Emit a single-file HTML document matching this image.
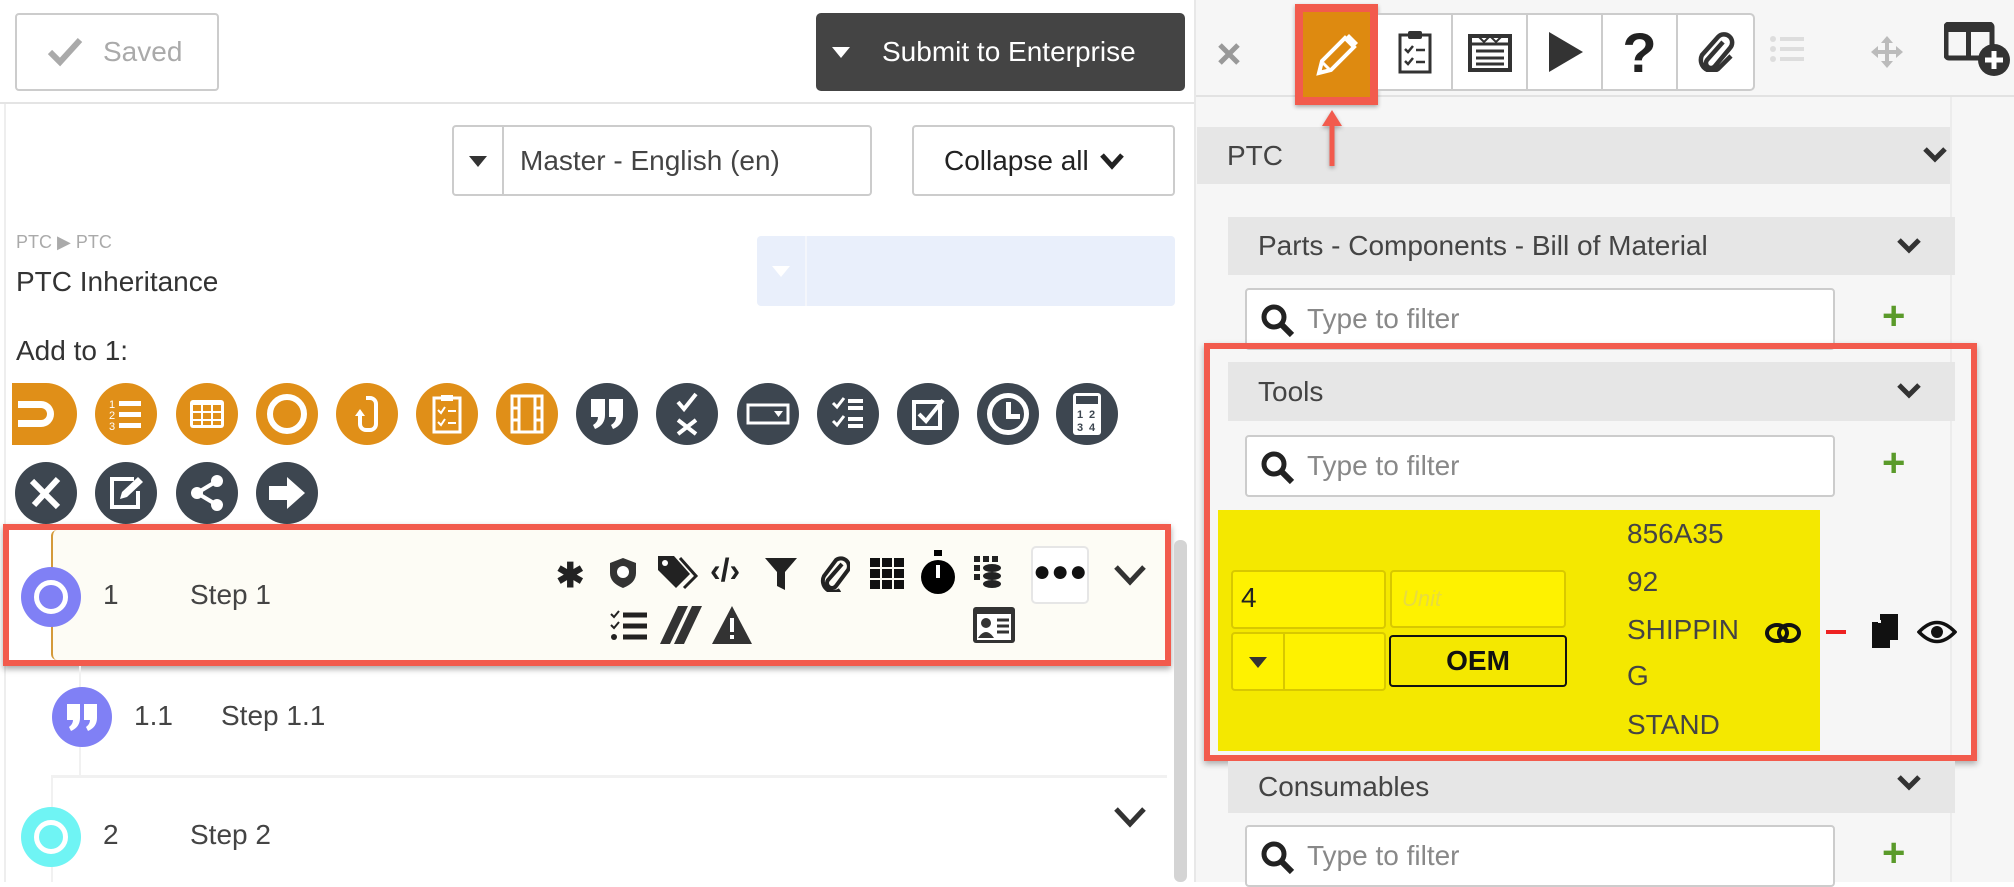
<!DOCTYPE html>
<html><head><meta charset="utf-8"><style>
*{box-sizing:border-box;margin:0;padding:0}
body{width:2014px;height:882px;overflow:hidden;background:#fff;font-family:"Liberation Sans",sans-serif;color:#333;position:relative}
.a{position:absolute}
.btn{border:2px solid #ccc;border-radius:4px;background:#fff}
.ci{position:absolute;width:62px;height:62px;border-radius:50%;display:flex;align-items:center;justify-content:center}
.o{background:#e08f18}.d{background:#3d4650}
.hdr{position:absolute;background:#e6e6e6;font-size:28px;color:#444;padding-left:30px;display:flex;align-items:center}
.flt{position:absolute;background:#fff;border:2px solid #ccc;border-radius:4px;font-size:28px;color:#888;display:flex;align-items:center;padding-left:60px}
.plus{position:absolute;color:#5a9a2a;font-size:40px;font-weight:bold}
.tb{position:absolute;top:13px;width:75px;height:78px;border-right:2px solid #ccc;display:flex;align-items:center;justify-content:center}
.yl{position:absolute;font-size:28px;color:#444}
</style></head><body>

<!-- LEFT PANEL -->
<div class="a btn" style="left:15px;top:13px;width:204px;height:78px;display:flex;align-items:center;padding-left:30px;font-size:28px;color:#aaa">
<svg width="36" height="30" viewBox="0 0 36 30"><path d="M3 15l10 10L33 3" stroke="#aaa" stroke-width="6" fill="none"/></svg><span style="margin-left:20px">Saved</span></div>
<div class="a" style="left:816px;top:13px;width:369px;height:78px;background:#444;border-radius:5px;color:#fff;font-size:28px;display:flex;align-items:center;padding-left:16px">
<svg width="20" height="14"><path d="M0 2h18L9 13z" fill="#fff"/></svg><span style="margin-left:30px">Submit to Enterprise</span></div>
<div class="a" style="left:0;top:102px;width:1196px;height:2px;background:#e4e4e4"></div>
<div class="a" style="left:1194px;top:0;width:2px;height:882px;background:#e8e8e8"></div>
<div class="a" style="left:4px;top:104px;width:2px;height:778px;background:#eee"></div>

<div class="a btn" style="left:452px;top:125px;width:420px;height:71px;display:flex;align-items:center;font-size:28px;color:#444">
<div style="width:50px;height:100%;border-right:2px solid #ccc;display:flex;align-items:center;justify-content:center"><svg width="18" height="12"><path d="M0 1h18L9 12z" fill="#333"/></svg></div><span style="margin-left:16px">Master - English (en)</span></div>
<div class="a btn" style="left:912px;top:125px;width:263px;height:71px;display:flex;align-items:center;font-size:28px;color:#222;padding-left:30px">Collapse all <svg width="26" height="20" style="margin-left:10px"><path d="M3 4l10 11L23 4" stroke="#222" stroke-width="5" fill="none"/></svg></div>

<div class="a" style="left:16px;top:232px;font-size:18px;color:#aaa">PTC ▶ PTC</div>
<div class="a" style="left:16px;top:266px;font-size:28px;color:#333">PTC Inheritance</div>
<div class="a" style="left:757px;top:236px;width:418px;height:70px;background:#e9effb;border-radius:4px">
<div style="width:50px;height:100%;border-right:2px solid #f4f6fb;display:flex;align-items:center;justify-content:center"><svg width="18" height="12"><path d="M0 1h18L9 12z" fill="#fff"/></svg></div></div>
<div class="a" style="left:16px;top:335px;font-size:28px;color:#333">Add to 1:</div>

<!-- icon circles row 1: centers 46 + 80n -->
<div class="ci o" style="left:12px;top:383px;width:65px;border-radius:0 31px 31px 0"><div style="width:36px;height:26px;border:7px solid #fff;border-left:none;border-radius:0 13px 13px 0;background:#e08f18;margin-left:-18px"></div></div>
<div class="ci o" style="left:95px;top:383px"><svg width="34" height="34"><g fill="#fff"><text x="0" y="11" font-size="11" font-family="Liberation Sans" fill="#fff">1</text><text x="0" y="22" font-size="11" font-family="Liberation Sans" fill="#fff">2</text><text x="0" y="33" font-size="11" font-family="Liberation Sans" fill="#fff">3</text><rect x="10" y="4" width="22" height="5"/><rect x="10" y="15" width="22" height="5"/><rect x="10" y="26" width="22" height="5"/></g></svg></div>
<div class="ci o" style="left:176px;top:383px"><svg width="34" height="28"><g fill="#fff"><rect x="0" y="0" width="34" height="28" rx="3"/></g><g fill="#e08f18"><rect x="3" y="5" width="8" height="6"/><rect x="13" y="5" width="8" height="6"/><rect x="23" y="5" width="8" height="6"/><rect x="3" y="13" width="8" height="6"/><rect x="13" y="13" width="8" height="6"/><rect x="23" y="13" width="8" height="6"/><rect x="3" y="21" width="8" height="4"/><rect x="13" y="21" width="8" height="4"/><rect x="23" y="21" width="8" height="4"/></g></svg></div>
<div class="ci o" style="left:256px;top:383px"><div style="width:40px;height:40px;border:6px solid #fff;border-radius:50%"></div></div>
<div class="ci o" style="left:336px;top:383px"><svg width="30" height="40"><path d="M14 4h4a6 6 0 0 1 6 6v20a6 6 0 0 1-6 6h-4a6 6 0 0 1-6-6V20" stroke="#fff" stroke-width="4" fill="none"/><path d="M3 22l5-7 5 7z" fill="#fff"/></svg></div>
<div class="ci o" style="left:416px;top:383px"><svg width="30" height="40"><rect x="2" y="4" width="26" height="34" fill="none" stroke="#fff" stroke-width="3"/><rect x="9" y="1" width="12" height="6" fill="#fff"/><path d="M6 16l3 3 4-6M6 28l3 3 4-6M16 17h8M16 29h8" stroke="#fff" stroke-width="2" fill="none"/></svg></div>
<div class="ci o" style="left:496px;top:383px"><svg width="34" height="40"><rect x="2" y="2" width="30" height="36" fill="none" stroke="#fff" stroke-width="3"/><path d="M9 2v36M25 2v36M2 14h7M2 26h7M25 14h7M25 26h7" stroke="#fff" stroke-width="3"/></svg></div>
<div class="ci d" style="left:576px;top:383px"><svg width="36" height="34"><path d="M2 2h14v16q0 10-10 14l-2-4q5-3 5-8H2zM20 2h14v16q0 10-10 14l-2-4q5-3 5-8h-7z" fill="#fff"/></svg></div>
<div class="ci d" style="left:656px;top:383px"><svg width="26" height="44"><path d="M4 10l6 7L22 2M4 28l18 14M22 28L4 42" stroke="#fff" stroke-width="4" fill="none"/></svg></div>
<div class="ci d" style="left:737px;top:383px"><svg width="44" height="22"><rect x="2" y="2" width="40" height="18" fill="none" stroke="#fff" stroke-width="3"/><path d="M28 8h9l-4.5 6z" fill="#fff"/></svg></div>
<div class="ci d" style="left:817px;top:383px"><svg width="34" height="38"><path d="M2 8l4 4 7-9M2 26l4 4 7-9" stroke="#fff" stroke-width="3" fill="none"/><path d="M17 6h15M17 13h15M17 24h15M17 31h15" stroke="#fff" stroke-width="4"/></svg></div>
<div class="ci d" style="left:897px;top:383px"><svg width="34" height="34"><rect x="3" y="5" width="26" height="26" fill="none" stroke="#fff" stroke-width="4"/><path d="M8 17l7 7L32 3" stroke="#fff" stroke-width="4" fill="none"/></svg></div>
<div class="ci d" style="left:977px;top:383px"><div style="width:42px;height:42px;border:5px solid #fff;border-radius:50%;position:relative"><div style="position:absolute;left:14px;top:4px;width:5px;height:16px;background:#fff"></div><div style="position:absolute;left:14px;top:16px;width:14px;height:5px;background:#fff"></div></div></div>
<div class="ci d" style="left:1056px;top:383px"><svg width="30" height="44"><rect x="1" y="1" width="28" height="42" rx="3" fill="#fff"/><rect x="4" y="4" width="22" height="8" fill="#3d4650"/><g fill="#3d4650" font-size="11" font-family="Liberation Sans" font-weight="bold"><text x="5" y="26">1</text><text x="17" y="26">2</text><text x="5" y="39">3</text><text x="17" y="39">4</text></g></svg></div>

<div class="ci d" style="left:15px;top:462px"><svg width="40" height="40"><path d="M6 8l26 26M32 6L8 32" stroke="#fff" stroke-width="6"/></svg></div>
<div class="ci d" style="left:95px;top:462px"><svg width="36" height="36"><path d="M26 4H4v28h26V16" stroke="#fff" stroke-width="4" fill="none"/><path d="M12 24l2-7L30 2l5 5-16 15z" fill="#fff"/></svg></div>
<div class="ci d" style="left:176px;top:462px"><svg width="40" height="40"><circle cx="10" cy="20" r="6" fill="#fff"/><circle cx="30" cy="8" r="6" fill="#fff"/><circle cx="30" cy="32" r="6" fill="#fff"/><path d="M10 20L30 8M10 20l20 12" stroke="#fff" stroke-width="4"/></svg></div>
<div class="ci d" style="left:256px;top:462px"><svg width="40" height="36"><path d="M2 11h18V2l18 16-18 16v-9H2z" fill="#fff"/></svg></div>

<!-- Step 1 -->
<div class="a" style="left:51px;top:530px;width:1115px;height:130px;background:#fdfcf5;border-left:2px solid #d49a3a;border-radius:6px"></div>
<div class="a" style="left:3px;top:524px;width:1168px;height:142px;border:6px solid #f25b4d;box-shadow:0 3px 6px rgba(0,0,0,.35)"></div>
<div class="a" style="left:21px;top:567px;width:60px;height:60px;border-radius:50%;background:#8080f5;display:flex;align-items:center;justify-content:center"><div style="width:34px;height:34px;border:5px solid #fff;border-radius:50%"></div></div>
<div class="a" style="left:103px;top:579px;font-size:28px;color:#444">1</div>
<div class="a" style="left:190px;top:579px;font-size:28px;color:#444">Step 1</div>
<div class="a" style="left:556px;top:556px;font-size:34px;font-weight:bold;color:#222;letter-spacing:2px">✱</div>
<svg class="a" style="left:608px;top:556px" width="30" height="34"><path d="M15 2l13 5v10q0 10-13 15Q2 27 2 17V7z" fill="#333"/><circle cx="15" cy="16" r="6" fill="#fff"/></svg>
<svg class="a" style="left:656px;top:554px" width="44" height="38"><path d="M2 2h16l16 18-14 14L2 16z" fill="#222"/><circle cx="9" cy="9" r="3" fill="#fff"/><path d="M24 4l16 18-12 12" stroke="#222" stroke-width="3" fill="none"/></svg>
<div class="a" style="left:710px;top:552px;font-size:32px;font-weight:bold;color:#222">‹/›</div>
<svg class="a" style="left:765px;top:556px" width="32" height="36"><path d="M0 2h32L20 16v18l-8-4V16z" fill="#222"/></svg>
<svg class="a" style="left:818px;top:554px" width="32" height="38"><path d="M24 10L10 26a5 5 0 0 0 8 6l12-16a8 8 0 0 0-12-10L6 22a11 11 0 0 0 16 14" stroke="#222" stroke-width="4" fill="none"/></svg>
<svg class="a" style="left:870px;top:558px" width="34" height="32"><g fill="#111"><rect x="0" y="0" width="10" height="9"/><rect x="12" y="0" width="10" height="9"/><rect x="24" y="0" width="10" height="9"/><rect x="0" y="11" width="10" height="9"/><rect x="12" y="11" width="10" height="9"/><rect x="24" y="11" width="10" height="9"/><rect x="0" y="22" width="10" height="9"/><rect x="12" y="22" width="10" height="9"/><rect x="24" y="22" width="10" height="9"/></g></svg>
<svg class="a" style="left:920px;top:550px" width="36" height="46"><rect x="14" y="0" width="8" height="6" fill="#000"/><circle cx="18" cy="27" r="17" fill="#000"/><rect x="16" y="15" width="4" height="13" fill="#fff"/></svg>
<svg class="a" style="left:974px;top:556px" width="30" height="36"><g fill="#222"><rect x="0" y="0" width="6" height="6"/><rect x="0" y="9" width="6" height="6"/><rect x="0" y="18" width="6" height="6"/><rect x="9" y="0" width="6" height="6"/><rect x="18" y="0" width="6" height="6"/><ellipse cx="18" cy="12" rx="9" ry="4"/><ellipse cx="18" cy="20" rx="9" ry="4"/><ellipse cx="18" cy="28" rx="9" ry="4"/></g></svg>
<div class="a" style="left:1031px;top:546px;width:58px;height:58px;border:2px solid #e6e6e6;border-radius:5px;background:#fff;font-size:30px;font-weight:bold;color:#111;text-align:center;line-height:48px">●●●</div>
<svg class="a" style="left:1113px;top:563px" width="34" height="24"><path d="M3 4l14 15L31 4" stroke="#333" stroke-width="5" fill="none"/></svg>
<svg class="a" style="left:610px;top:610px" width="38" height="32"><path d="M1 4l3 3 5-6M1 15l3 3 5-6" stroke="#222" stroke-width="2" fill="none"/><circle cx="4" cy="27" r="3" fill="#222"/><path d="M13 5h24M13 16h24M13 27h24" stroke="#222" stroke-width="5"/></svg>
<svg class="a" style="left:660px;top:606px" width="42" height="38"><path d="M18 0h10L10 38H0zM32 0h10L24 38H14z" fill="#333"/></svg>
<svg class="a" style="left:712px;top:606px" width="40" height="38"><path d="M20 0L40 38H0z" fill="#333"/><rect x="18" y="12" width="4" height="14" fill="#fff"/><rect x="18" y="29" width="4" height="4" fill="#fff"/></svg>
<svg class="a" style="left:972px;top:606px" width="44" height="38"><rect x="1" y="1" width="42" height="36" rx="3" fill="#333"/><rect x="5" y="8" width="34" height="26" fill="#fff"/><circle cx="14" cy="17" r="5" fill="#333"/><path d="M6 32q8-12 16 0z" fill="#333"/><path d="M25 14h12M25 20h12M25 26h12" stroke="#333" stroke-width="3"/></svg>

<!-- step 1.1 -->
<div class="a" style="left:79px;top:666px;width:2px;height:110px;background:#f1f1f1"></div>
<div class="a" style="left:52px;top:687px;width:60px;height:60px;border-radius:50%;background:#8080f5;display:flex;align-items:center;justify-content:center"><svg width="34" height="30"><path d="M2 2h13v14q0 9-9 13l-2-4q4-3 4-7H2zM19 2h13v14q0 9-9 13l-2-4q4-3 4-7h-6z" fill="#fff"/></svg></div>
<div class="a" style="left:134px;top:700px;font-size:28px;color:#444">1.1</div>
<div class="a" style="left:221px;top:700px;font-size:28px;color:#444">Step 1.1</div>
<div class="a" style="left:51px;top:775px;width:1116px;height:3px;background:#f1f1f1"></div>
<div class="a" style="left:51px;top:778px;width:2px;height:104px;background:#f1f1f1"></div>
<!-- step 2 -->
<div class="a" style="left:21px;top:807px;width:60px;height:60px;border-radius:50%;background:#6ff4f4;display:flex;align-items:center;justify-content:center"><div style="width:34px;height:34px;border:5px solid #fff;border-radius:50%"></div></div>
<div class="a" style="left:103px;top:819px;font-size:28px;color:#444">2</div>
<div class="a" style="left:190px;top:819px;font-size:28px;color:#444">Step 2</div>
<svg class="a" style="left:1113px;top:805px" width="34" height="24"><path d="M3 4l14 15L31 4" stroke="#333" stroke-width="5" fill="none"/></svg>
<div class="a" style="left:1174px;top:540px;width:13px;height:342px;background:#d4d4d4;border-radius:6px"></div>

<!-- RIGHT PANEL -->
<div class="a" style="left:1196px;top:0;width:818px;height:882px;background:#f6f6f6"></div>
<div class="a" style="left:1196px;top:95px;width:818px;height:2px;background:#e2e2e2"></div>
<div class="a" style="left:1950px;top:97px;width:2px;height:785px;background:#ececec"></div>
<svg class="a" style="left:1217px;top:42px" width="24" height="24"><path d="M3 3l18 18M21 3L3 21" stroke="#999" stroke-width="5"/></svg>
<div class="a" style="left:1295px;top:4px;width:83px;height:101px;background:#f25b4d;box-shadow:0 2px 4px rgba(0,0,0,.3)"></div>
<div class="a" style="left:1303px;top:12px;width:67px;height:85px;background:#de8a10;display:flex;align-items:center;justify-content:center"><svg width="44" height="44"><path d="M4 40l3-12L30 5l9 9-23 23z" fill="none" stroke="#fff" stroke-width="4"/><path d="M30 5l4-4 9 9-4 4z" fill="#fff"/><path d="M8 30l6 6" stroke="#fff" stroke-width="3"/></svg></div>
<div class="a" style="left:1378px;top:13px;width:377px;height:78px;background:#fff;border:2px solid #ccc;border-left:none;border-radius:0 5px 5px 0"></div>
<div class="tb" style="left:1378px"><svg width="34" height="44"><rect x="2" y="5" width="30" height="37" fill="none" stroke="#333" stroke-width="3"/><rect x="10" y="1" width="14" height="8" rx="2" fill="#333"/><path d="M7 19l3 3 5-6M7 31l3 3 5-6M18 20h9M18 32h9" stroke="#333" stroke-width="2.5" fill="none"/></svg></div>
<div class="tb" style="left:1453px"><svg width="44" height="40"><rect x="2" y="4" width="40" height="34" fill="none" stroke="#333" stroke-width="4"/><path d="M2 12h40M8 19h28M8 26h28M8 32h28" stroke="#333" stroke-width="3"/><path d="M10 4l6 6 6-6 6 6 6-6" stroke="#333" stroke-width="2" fill="none"/></svg></div>
<div class="tb" style="left:1528px"><svg width="40" height="44"><path d="M4 2l34 20L4 42z" fill="#333"/></svg></div>
<div class="tb" style="left:1603px;font-size:56px;font-weight:bold;color:#222">?</div>
<div class="tb" style="left:1678px;border-right:none"><svg width="38" height="40"><path d="M26 10L10 28a5 5 0 0 0 8 6L33 16a8 8 0 0 0-12-11L5 23a11 11 0 0 0 16 14L34 24" stroke="#333" stroke-width="4.5" fill="none"/></svg></div>
<svg class="a" style="left:1770px;top:36px" width="34" height="26"><g fill="#ddd"><circle cx="3" cy="3" r="3"/><circle cx="3" cy="13" r="3"/><circle cx="3" cy="23" r="3"/><rect x="10" y="1" width="24" height="4"/><rect x="10" y="11" width="24" height="4"/><rect x="10" y="21" width="24" height="4"/></g></svg>
<svg class="a" style="left:1870px;top:35px" width="34" height="34"><path d="M17 1l6 7h-4v7h7v-4l7 6-7 6v-4h-7v7h4l-6 7-6-7h4v-7H8v4l-7-6 7-6v4h7V8h-4z" fill="#bbb"/></svg>
<svg class="a" style="left:1944px;top:22px" width="70" height="56"><rect x="2" y="2" width="46" height="34" rx="3" fill="none" stroke="#333" stroke-width="5"/><rect x="2" y="2" width="46" height="8" fill="#333"/><rect x="22" y="2" width="5" height="34" fill="#333"/><circle cx="50" cy="38" r="16" fill="#333"/><path d="M50 29v18M41 38h18" stroke="#fff" stroke-width="5"/></svg>

<div class="hdr" style="left:1197px;top:127px;width:753px;height:57px">PTC</div>
<svg class="a" style="left:1922px;top:146px" width="26" height="18"><path d="M3 3l10 10L23 3" stroke="#333" stroke-width="5" fill="none"/></svg>
<!-- arrow (on top of header) -->
<svg class="a" style="left:1320px;top:108px;filter:drop-shadow(0 2px 2px rgba(0,0,0,.3))" width="24" height="60"><path d="M12 58V14" stroke="#f25b4d" stroke-width="5"/><path d="M2 18L12 2l10 16z" fill="#f25b4d"/></svg>

<div class="hdr" style="left:1228px;top:217px;width:727px;height:58px">Parts - Components - Bill of Material</div>
<svg class="a" style="left:1896px;top:237px" width="26" height="18"><path d="M3 3l10 10L23 3" stroke="#333" stroke-width="5" fill="none"/></svg>
<div class="flt" style="left:1245px;top:288px;width:590px;height:62px">Type to filter</div>
<svg class="a" style="left:1261px;top:304px" width="34" height="34"><circle cx="13" cy="13" r="10" stroke="#222" stroke-width="5" fill="none"/><path d="M20 20l11 11" stroke="#222" stroke-width="6"/></svg>
<div class="plus" style="left:1882px;top:294px">+</div>

<div class="hdr" style="left:1228px;top:362px;width:727px;height:59px">Tools</div>
<svg class="a" style="left:1896px;top:382px" width="26" height="18"><path d="M3 3l10 10L23 3" stroke="#333" stroke-width="5" fill="none"/></svg>
<div class="flt" style="left:1245px;top:435px;width:590px;height:62px">Type to filter</div>
<svg class="a" style="left:1261px;top:451px" width="34" height="34"><circle cx="13" cy="13" r="10" stroke="#222" stroke-width="5" fill="none"/><path d="M20 20l11 11" stroke="#222" stroke-width="6"/></svg>
<div class="plus" style="left:1882px;top:441px">+</div>

<div class="a" style="left:1218px;top:510px;width:602px;height:241px;background:#f4e800"></div>
<div class="a" style="left:1231px;top:570px;width:155px;height:59px;border:2px solid #d8c800;border-radius:4px;background:#fef200;font-size:28px;color:#222;padding:10px 0 0 8px">4</div>
<div class="a" style="left:1390px;top:570px;width:176px;height:58px;border:2px solid #d8c800;border-radius:4px;background:#fef200;font-size:22px;color:#e8dc40;font-style:italic;padding:14px 0 0 10px">Unit</div>
<div class="a" style="left:1231px;top:632px;width:155px;height:59px;border:2px solid #d8c800;border-radius:4px;background:#fef200"><div style="width:52px;height:100%;border-right:2px solid #d8c800;display:flex;align-items:center;justify-content:center"><svg width="18" height="12"><path d="M0 1h18L9 12z" fill="#333"/></svg></div></div>
<div class="a" style="left:1389px;top:635px;width:178px;height:52px;border:2px solid #111;border-radius:4px;background:#f4e800;font-size:28px;font-weight:bold;color:#111;text-align:center;line-height:48px">OEM</div>
<div class="yl" style="left:1627px;top:518px">856A35</div>
<div class="yl" style="left:1627px;top:566px">92</div>
<div class="yl" style="left:1627px;top:614px">SHIPPIN</div>
<div class="yl" style="left:1627px;top:660px">G</div>
<div class="yl" style="left:1627px;top:709px">STAND</div>
<svg class="a" style="left:1765px;top:622px" width="36" height="22"><ellipse cx="12" cy="11" rx="10" ry="8" stroke="#111" stroke-width="4" fill="none"/><ellipse cx="24" cy="11" rx="10" ry="8" stroke="#111" stroke-width="4" fill="none"/></svg>
<div class="a" style="left:1826px;top:630px;width:20px;height:4px;background:#e22"></div>
<svg class="a" style="left:1872px;top:614px" width="28" height="36"><rect x="0" y="8" width="18" height="26" fill="#111"/><rect x="8" y="0" width="18" height="26" fill="#111"/><rect x="6" y="6" width="3" height="3" fill="#f6f6f6"/></svg>
<svg class="a" style="left:1917px;top:619px" width="40" height="26"><path d="M2 13Q20-6 38 13Q20 32 2 13z" stroke="#111" stroke-width="3.5" fill="none"/><circle cx="20" cy="13" r="6" fill="#111"/></svg>
<div class="a" style="left:1204px;top:343px;width:773px;height:418px;border:6px solid #f25b4d;box-shadow:0 3px 6px rgba(0,0,0,.3)"></div>

<div class="hdr" style="left:1228px;top:761px;width:727px;height:52px">Consumables</div>
<svg class="a" style="left:1896px;top:774px" width="26" height="18"><path d="M3 3l10 10L23 3" stroke="#333" stroke-width="5" fill="none"/></svg>
<div class="flt" style="left:1245px;top:825px;width:590px;height:62px">Type to filter</div>
<svg class="a" style="left:1261px;top:841px" width="34" height="34"><circle cx="13" cy="13" r="10" stroke="#222" stroke-width="5" fill="none"/><path d="M20 20l11 11" stroke="#222" stroke-width="6"/></svg>
<div class="plus" style="left:1882px;top:831px">+</div>
</body></html>
